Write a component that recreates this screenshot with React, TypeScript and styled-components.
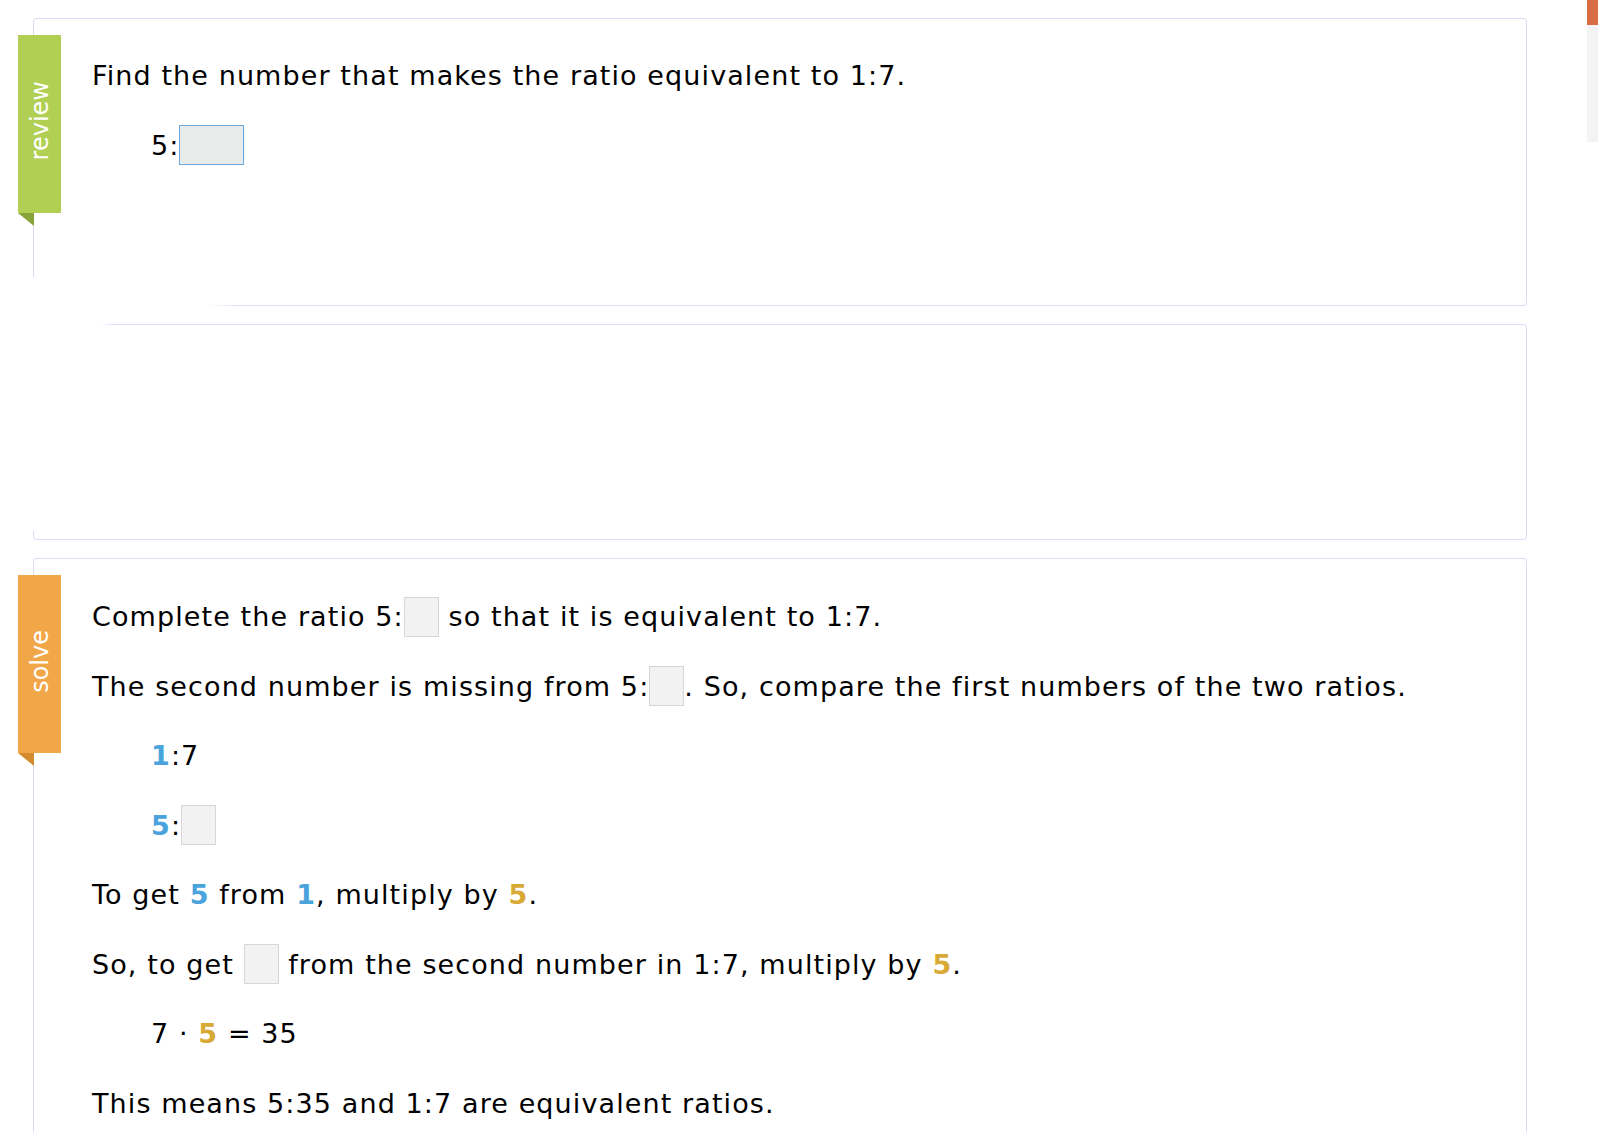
import React from "react";
import styled, { createGlobalStyle } from "styled-components";

const Global = createGlobalStyle`
  html, body { margin: 0; padding: 0; background: #ffffff; }
  body { font-family: "DejaVu Sans", Verdana, sans-serif; color: #000; }
`;

const Page = styled.main`
  width: 1494px;
  padding: 18px 0 0 33px;
  display: flex;
  flex-direction: column;
  gap: 18px;
`;

const Card = styled.section<{ $h?: number; $pt: number; $fade?: "bottom" | "top" }>`
  position: relative;
  box-sizing: border-box;
  ${(p) => (p.$h ? `height: ${p.$h}px;` : "")}
  border: 1px solid #dcd9f6;
  border-radius: 3px;
  background: #fff;
  padding: ${(p) => p.$pt}px 0 40px 58px;
  display: flex;
  flex-direction: column;
  gap: 29.5px;

  ${(p) =>
    p.$fade === "bottom"
      ? `&::after {
      content: "";
      position: absolute;
      left: -2px;
      bottom: -2px;
      width: 212px;
      height: 30px;
      background: linear-gradient(to right, #fff 82%, rgba(255,255,255,0));
    }`
      : ""}
  ${(p) =>
    p.$fade === "top"
      ? `&::after {
      content: "";
      position: absolute;
      left: -2px;
      top: -2px;
      width: 84px;
      height: 208px;
      background: linear-gradient(to right, #fff 80%, rgba(255,255,255,0));
    }`
      : ""}
`;

const Ribbon = styled.div<{ $color: string; $fold: string }>`
  position: absolute;
  left: -16px;
  top: 16px;
  width: 43px;
  height: 178px;
  background: ${(p) => p.$color};
  display: flex;
  align-items: center;
  justify-content: center;
  z-index: 2;

  &::after {
    content: "";
    position: absolute;
    left: 0;
    top: 100%;
    width: 0;
    height: 0;
    border-top: 13px solid ${(p) => p.$fold};
    border-left: 16px solid transparent;
  }
`;

const RibbonLabel = styled.span`
  writing-mode: vertical-rl;
  transform: rotate(180deg);
  color: #fff;
  font-size: 24px;
  line-height: 24px;
  margin-top: -6px;
`;

const Line = styled.div<{ $indent?: boolean }>`
  height: 40px;
  line-height: 40px;
  font-size: 27px;
  letter-spacing: 1.1px;
  white-space: pre;
  padding-left: ${(p) => (p.$indent ? "59px" : "0")};
`;

const Box = styled.span<{ $w: number; $active?: boolean }>`
  display: inline-block;
  box-sizing: border-box;
  width: ${(p) => p.$w}px;
  height: 40px;
  vertical-align: middle;
  position: relative;
  top: -2px;
  background: ${(p) => (p.$active ? "#e9ebea" : "#f3f2f3")};
  border: 1px solid ${(p) => (p.$active ? "#6aa8de" : "#d6d6d6")};
`;

const Num = styled.b<{ $tone: "blue" | "gold" }>`
  font-weight: bold;
  color: ${(p) => (p.$tone === "blue" ? "#4aa3dc" : "#d8a935")};
`;

const SideTab = styled.div`
  position: fixed;
  top: 0;
  right: 0;
  width: 11px;
  height: 142px;
  background: #f3f3f3;

  &::before {
    content: "";
    display: block;
    height: 25px;
    background: #d96d43;
  }
`;

export default function App() {
  return (
    <>
      <Global />
      <SideTab />
      <Page>
        <Card $h={288} $pt={37} $fade="bottom">
          <Ribbon $color="#b1cf52" $fold="#8aa43a">
            <RibbonLabel>review</RibbonLabel>
          </Ribbon>
          <Line>Find the number that makes the ratio equivalent to 1:7.</Line>
          <Line $indent>
            5:<Box $w={65} $active />
          </Line>
        </Card>

        <Card $h={216} $pt={37} $fade="top" />

        <Card $pt={38}>
          <Ribbon $color="#f1a748" $fold="#d48b2d">
            <RibbonLabel>solve</RibbonLabel>
          </Ribbon>
          <Line>
            Complete the ratio 5:<Box $w={35} /> so that it is equivalent to 1:7.
          </Line>
          <Line>
            The second number is missing from 5:<Box $w={35} />. So, compare the first numbers of the two ratios.
          </Line>
          <Line $indent>
            <Num $tone="blue">1</Num>:7
          </Line>
          <Line $indent>
            <Num $tone="blue">5</Num>:<Box $w={35} />
          </Line>
          <Line>
            To get <Num $tone="blue">5</Num> from <Num $tone="blue">1</Num>, multiply by <Num $tone="gold">5</Num>.
          </Line>
          <Line>
            So, to get <Box $w={35} /> from the second number in 1:7, multiply by <Num $tone="gold">5</Num>.
          </Line>
          <Line $indent>
            7 · <Num $tone="gold">5</Num> = 35
          </Line>
          <Line>This means 5:35 and 1:7 are equivalent ratios.</Line>
        </Card>
      </Page>
    </>
  );
}
